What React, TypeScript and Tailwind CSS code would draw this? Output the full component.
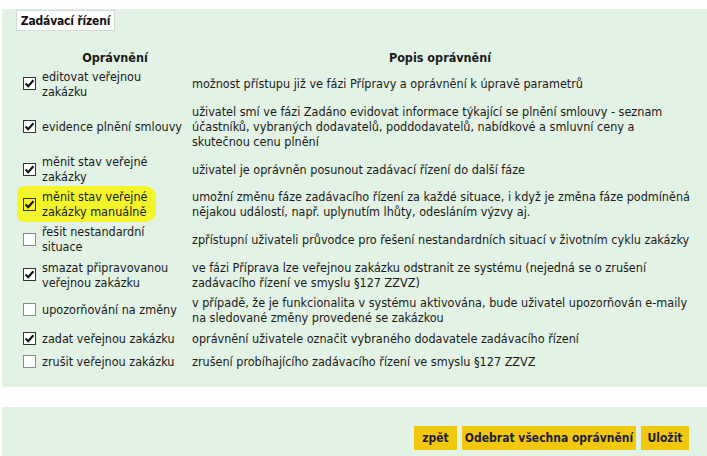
import React from "react";

type Row = {
  checked: boolean;
  label: string[];
  desc: string[];
  highlight?: boolean;
};

const rows: Row[] = [
  {
    checked: true,
    label: ["editovat veřejnou", "zakázku"],
    desc: ["možnost přístupu již ve fázi Přípravy a oprávnění k úpravě parametrů"],
  },
  {
    checked: true,
    label: ["evidence plnění smlouvy"],
    desc: [
      "uživatel smí ve fázi Zadáno evidovat informace týkající se plnění smlouvy - seznam",
      "účastníků, vybraných dodavatelů, poddodavatelů, nabídkové a smluvní ceny a",
      "skutečnou cenu plnění",
    ],
  },
  {
    checked: true,
    label: ["měnit stav veřejné", "zakázky"],
    desc: ["uživatel je oprávněn posunout zadávací řízení do další fáze"],
  },
  {
    checked: true,
    highlight: true,
    label: ["měnit stav veřejné", "zakázky manuálně"],
    desc: [
      "umožní změnu fáze zadávacího řízení za každé situace, i když je změna fáze podmíněná",
      "nějakou událostí, např. uplynutím lhůty, odesláním výzvy aj.",
    ],
  },
  {
    checked: false,
    label: ["řešit nestandardní", "situace"],
    desc: ["zpřístupní uživateli průvodce pro řešení nestandardních situací v životním cyklu zakázky"],
  },
  {
    checked: true,
    label: ["smazat připravovanou", "veřejnou zakázku"],
    desc: [
      "ve fázi Příprava lze veřejnou zakázku odstranit ze systému (nejedná se o zrušení",
      "zadávacího řízení ve smyslu §127 ZZVZ)",
    ],
  },
  {
    checked: false,
    label: ["upozorňování na změny"],
    desc: [
      "v případě, že je funkcionalita v systému aktivována, bude uživatel upozorňován e-maily",
      "na sledované změny provedené se zakázkou",
    ],
  },
  {
    checked: true,
    label: ["zadat veřejnou zakázku"],
    desc: ["oprávnění uživatele označit vybraného dodavatele zadávacího řízení"],
  },
  {
    checked: false,
    label: ["zrušit veřejnou zakázku"],
    desc: ["zrušení probíhajícího zadávacího řízení ve smyslu §127 ZZVZ"],
  },
];

function Box({ checked, highlight }: { checked: boolean; highlight?: boolean }) {
  return (
    <span
      className={
        "flex h-[13px] w-[13px] shrink-0 items-center justify-center border " +
        (checked ? "border-[#333333] " : "border-[#8a8a8a] ") +
        (highlight ? "bg-[#f3f52a]" : "bg-white")
      }
    >
      {checked && (
        <svg width="11" height="11" viewBox="0 0 11 11">
          <path d="M1.6 5.6 L4.2 8.3 L9.4 2.3" fill="none" stroke="#111" strokeWidth="2.1" />
        </svg>
      )}
    </span>
  );
}

const buttons: { t: string; w: string }[] = [
  { t: "zpět", w: "w-[43px]" },
  { t: "Odebrat všechna oprávnění", w: "w-[174px]" },
  { t: "Uložit", w: "w-[48px]" },
];

export default function App() {
  return (
    <div
      className="h-[456px] w-[707px] overflow-hidden bg-white pl-[2px] pt-[9px] text-[12.5px] text-[#1a1a1a]"
      style={{ fontFamily: '"DejaVu Sans Condensed", "DejaVu Sans", sans-serif' }}
    >
      <section className="h-[378px] bg-[#e2f2e4] pl-[16px] pt-[1px]">
        <div className="ml-[-2px] inline-flex h-[21px] w-[99px] items-center justify-center border border-[#d3ddd3] bg-white">
          <span className="whitespace-nowrap text-[12px] font-bold tracking-[-0.2px] text-[#111]">
            Zadávací řízení
          </span>
        </div>

        <div className="mt-[15px] flex pb-[1px] pt-[4px] font-bold leading-[15px]">
          <div className="w-[24px] shrink-0" />
          <div className="w-[146px] shrink-0 text-center">Oprávnění</div>
          <div className="w-[4px] shrink-0" />
          <div className="w-[496px] shrink-0 text-center">Popis oprávnění</div>
        </div>

        <div className="flex flex-col">
          {rows.map((r, i) => (
            <div key={i} className="flex min-h-[23px] items-center py-[2.5px] leading-[15.1px]">
              <div className="flex w-[170px] shrink-0">
                <div
                  className={
                    "flex items-center " +
                    (r.highlight
                      ? "-my-[3px] ml-[-1px] rounded-l-[7px] rounded-r-[10px] bg-[#f3f52a] py-[3px] pl-[6px] pr-[8px]"
                      : "pl-[5px]")
                  }
                >
                  <Box checked={r.checked} highlight={r.highlight} />
                  <div className="ml-[6px] whitespace-nowrap">
                    {r.label.map((l, j) => (
                      <div key={j}>{l}</div>
                    ))}
                  </div>
                </div>
              </div>
              <div className="ml-[4px] whitespace-nowrap">
                {r.desc.map((d, j) => (
                  <div key={j}>{d}</div>
                ))}
              </div>
            </div>
          ))}
        </div>
      </section>

      <div className="h-[20px]" />

      <section className="flex h-[49px] items-start justify-end gap-[5px] bg-[#e2f2e4] pr-[18px] pt-[19px]">
        {buttons.map((b) => (
          <button
            key={b.t}
            className={
              "h-[24px] whitespace-nowrap bg-[#f2c80c] text-center text-[12px] font-bold text-[#1c1c3a] " + b.w
            }
          >
            {b.t}
          </button>
        ))}
      </section>
    </div>
  );
}
